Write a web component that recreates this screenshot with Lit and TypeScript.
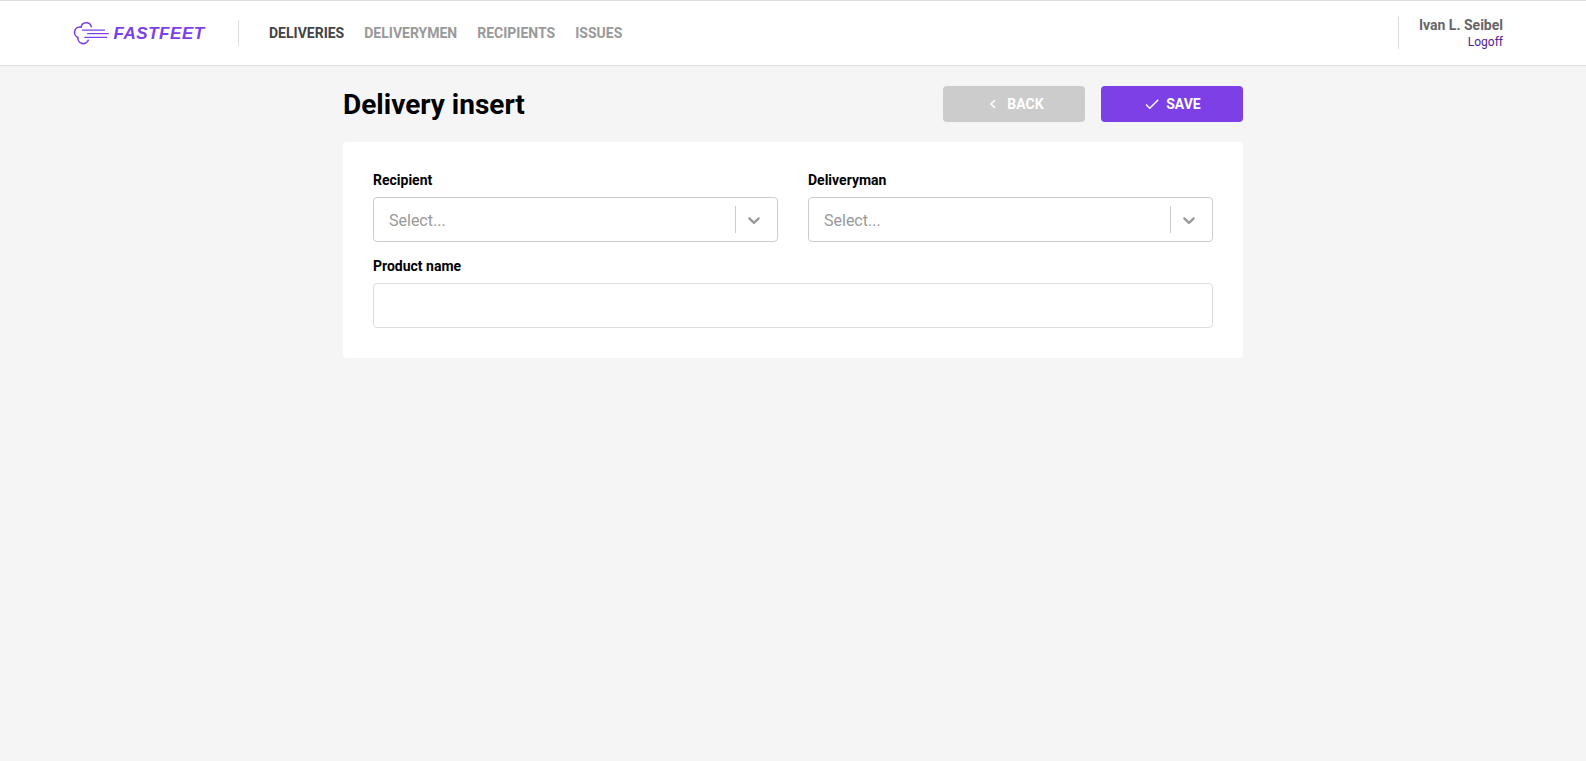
import { LitElement, html, css } from "lit";
import { customElement, property } from "lit/decorators.js";

@customElement("ff-logo")
class FfLogo extends LitElement {
  static styles = css`
    :host { display: flex; width: 134px; height: 24px; color: #7d40e7; }
    .mark { display: block; width: 40px; height: 24px; flex: none; }
    .name {
      font: italic bold 17px/22px "Liberation Sans", Arial, sans-serif;
      letter-spacing: 0.54px;
      margin: 2px 0 0 0.5px;
    }
  `;
  render() {
    return html`
      <svg class="mark" viewBox="0 0 40 24" fill="none" stroke="currentColor" stroke-linecap="round">
        <path stroke-width="1.6" d="M18.3 5.6A5.3 5.3 0 0 0 8 6.1A5.4 5.4 0 0 0 4.9 16.4A5.45 5.45 0 0 0 15.3 19.3" />
        <path stroke-width="1.3" d="M9.4 9.1H31.5M14.6 12.7H35.3M11.8 16.4H33.7" />
      </svg>
      <span class="name">FASTFEET</span>
    `;
  }
}

@customElement("ff-header")
class FfHeader extends LitElement {
  static styles = css`
    :host {
      display: flex; align-items: center; justify-content: space-between;
      box-sizing: border-box; height: 66px; padding: 0 83px 0 73px;
      background: #fff; border-top: 1px solid #ddd; border-bottom: 1px solid #ddd;
    }
    .left, .nav { display: flex; align-items: center; }
    .nav {
      box-sizing: border-box; height: 26px; gap: 20px;
      margin-left: 31px; padding-left: 30px; border-left: 1px solid #ddd;
    }
    .link { font-size: 14px; line-height: 16px; font-weight: bold; color: #999; text-decoration: none; }
    .active { color: #444; }
    .profile {
      display: flex; flex-direction: column; align-items: flex-end;
      box-sizing: border-box; height: 32px;
      padding-left: 20px; border-left: 1px solid #ddd;
    }
    .user { font-size: 14px; line-height: 16px; color: #666; }
    .logoff { font-size: 12px; line-height: 14px; margin-top: 2px; color: #551a8b; text-decoration: none; }
  `;
  render() {
    return html`
      <div class="left">
        <ff-logo></ff-logo>
        <nav class="nav">
          <a class="link active">DELIVERIES</a>
          <a class="link">DELIVERYMEN</a>
          <a class="link">RECIPIENTS</a>
          <a class="link">ISSUES</a>
        </nav>
      </div>
      <div class="profile">
        <strong class="user">Ivan L. Seibel</strong>
        <a class="logoff">Logoff</a>
      </div>
    `;
  }
}

@customElement("ff-select")
class FfSelect extends LitElement {
  @property() label = "";
  static styles = css`
    :host { display: flex; flex-direction: column; }
    .label { font-size: 14px; line-height: 16px; font-weight: bold; margin-bottom: 9px; }
    .control {
      display: flex; align-items: center; box-sizing: border-box; height: 45px;
      border: 1px solid #ccc; border-radius: 4px; background: #fff;
    }
    .placeholder { flex: 1; padding: 2px 0 0 15px; font-size: 16px; line-height: 19px; color: #999; }
    .separator { width: 1px; height: 27px; background: #ccc; }
    .arrow { display: block; width: 20px; height: 20px; margin: 0 13px 0 8px; fill: #999; }
  `;
  render() {
    return html`
      <span class="label">${this.label}</span>
      <div class="control">
        <span class="placeholder">Select...</span>
        <span class="separator"></span>
        <svg class="arrow" viewBox="0 0 20 20">
          <path d="M4.516 7.548c0.436-0.446 1.043-0.481 1.576 0l3.908 3.747 3.908-3.747c0.533-0.481 1.141-0.446 1.574 0 0.436 0.445 0.408 1.197 0 1.615-0.406 0.418-4.695 4.502-4.695 4.502-0.217 0.223-0.502 0.335-0.787 0.335s-0.57-0.112-0.789-0.335c0 0-4.287-4.084-4.695-4.502s-0.436-1.17 0-1.615z" />
        </svg>
      </div>
    `;
  }
}

@customElement("app-root")
class AppRoot extends LitElement {
  static styles = css`
    :host {
      display: block; min-height: 100vh; background: #f5f5f5; color: #000;
      font-family: Roboto, sans-serif;
    }
    .content { width: 900px; margin: 0 auto; padding-top: 20px; }
    .top { display: flex; align-items: center; height: 36px; gap: 16px; margin-bottom: 20px; }
    .title { flex: 1; margin: 0; font-size: 28px; line-height: 33px; }
    .button {
      display: flex; align-items: center; justify-content: center; gap: 5px;
      width: 142px; height: 36px; padding: 0; border: 0; border-radius: 4px;
      font: bold 14px/16px Roboto, sans-serif; color: #fff; background: #7d40e7;
    }
    .back { background: #ccc; }
    .icon { display: block; width: 18px; height: 18px; fill: currentColor; }
    .card {
      display: grid; grid-template-columns: 1fr 1fr; gap: 16px 30px;
      box-sizing: border-box; height: 216px; padding: 30px;
      border-radius: 4px; background: #fff;
    }
    .field { grid-column: 1 / -1; display: flex; flex-direction: column; }
    .label { font-size: 14px; line-height: 16px; font-weight: bold; margin-bottom: 9px; }
    .input {
      box-sizing: border-box; width: 100%; height: 45px; padding: 0 15px;
      border: 1px solid #ddd; border-radius: 4px; background: #fff;
      font: 16px Roboto, sans-serif;
    }
  `;
  render() {
    return html`
      <ff-header></ff-header>
      <main class="content">
        <div class="top">
          <h1 class="title">Delivery insert</h1>
          <button class="button back">
            <svg class="icon" viewBox="0 0 24 24"><path d="M15.41 7.41L14 6l-6 6 6 6 1.41-1.41L10.83 12z" /></svg>
            BACK
          </button>
          <button class="button">
            <svg class="icon" viewBox="0 0 24 24"><path d="M9 16.2L4.8 12l-1.4 1.4L9 19 21 7l-1.4-1.4L9 16.2z" /></svg>
            SAVE
          </button>
        </div>
        <form class="card">
          <ff-select label="Recipient"></ff-select>
          <ff-select label="Deliveryman"></ff-select>
          <div class="field">
            <label class="label" for="product">Product name</label>
            <input class="input" id="product" />
          </div>
        </form>
      </main>
    `;
  }
}
